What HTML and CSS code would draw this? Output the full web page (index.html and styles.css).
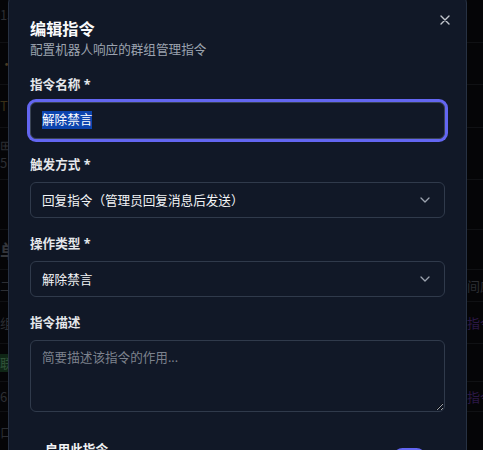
FILE: index.html
```html
<!DOCTYPE html>
<html lang="zh-CN">
<head>
<meta charset="utf-8">
<title>编辑指令</title>
<link rel="stylesheet" href="styles.css">
</head>
<body>
<div class="page">
  <div class="row r1"><span class="lt">15</span><span class="rt"></span></div>
  <div class="row r2"><span class="lt dot">•</span><span class="rt"></span></div>
  <div class="row r3"><span class="lt warn">T</span><span class="rt"></span></div>
  <div class="row r4"><span class="lt">⊞<br>5</span><span class="rt"></span></div>
  <div class="row r5"><span class="lt"></span><span class="rt"></span></div>
  <div class="row r6"><span class="lt big">单</span><span class="rt"></span></div>
  <div class="row r7"><span class="lt">二</span><span class="rt">间应</span></div>
  <div class="row r8"><span class="lt">组</span><span class="rt purple">指令</span></div>
  <div class="row r9"><span class="lt green">联</span><span class="rt"></span></div>
  <div class="row r10"><span class="lt">6</span><span class="rt purple">指令</span></div>
  <div class="row r11"><span class="lt">口</span><span class="rt"></span></div>
</div>

<div class="overlay">
  <div class="modal">
    <button class="close" type="button" aria-label="关闭">
      <svg width="10" height="10" viewBox="0 0 10 10"><path d="M1 1 L9 9 M9 1 L1 9" stroke="#c3c7cf" stroke-width="1.4" stroke-linecap="round" fill="none"/></svg>
    </button>
    <header class="head">
      <h2 class="title">编辑指令</h2>
      <p class="subtitle">配置机器人响应的群组管理指令</p>
    </header>
    <div class="form">
      <div class="field">
        <label class="label">指令名称 *</label>
        <div class="control focused"><span class="selected">解除禁言</span></div>
      </div>
      <div class="field">
        <label class="label">触发方式 *</label>
        <div class="control select">
          <span>回复指令（管理员回复消息后发送）</span>
          <svg class="chev" width="10" height="6" viewBox="0 0 10 6"><path d="M1 1 L5 5 L9 1" stroke="#9ca3af" stroke-width="1.3" fill="none" stroke-linecap="round" stroke-linejoin="round"/></svg>
        </div>
      </div>
      <div class="field">
        <label class="label">操作类型 *</label>
        <div class="control select">
          <span>解除禁言</span>
          <svg class="chev" width="10" height="6" viewBox="0 0 10 6"><path d="M1 1 L5 5 L9 1" stroke="#9ca3af" stroke-width="1.3" fill="none" stroke-linecap="round" stroke-linejoin="round"/></svg>
        </div>
      </div>
      <div class="field">
        <label class="label">指令描述</label>
        <textarea class="control textarea" placeholder="简要描述该指令的作用..."></textarea>
      </div>
      <div class="toggle-row">
        <div class="toggle-text">
          <div class="toggle-title">启用此指令</div>
          <div class="toggle-desc">关闭后机器人将不会响应此指令</div>
        </div>
        <div class="switch"><span class="knob"></span></div>
      </div>
    </div>
  </div>
</div>
</body>
</html>
```

FILE: styles.css
```css
* { box-sizing: border-box; }
html, body { margin: 0; padding: 0; }
body {
  width: 483px;
  height: 450px;
  overflow: hidden;
  background: #050507;
  font-family: "Noto Sans", "Noto Sans CJK SC", sans-serif;
  position: relative;
}

/* dimmed page behind the dialog */
.page {
  display: flex;
  flex-direction: column;
  width: 483px;
}
.row {
  display: flex;
  justify-content: space-between;
  align-items: center;
  border-bottom: 1px solid #101114;
  font-size: 13px;
  color: #2c2e33;
  font-family: "Noto Sans CJK SC", sans-serif;
}
.row .rt { width: 16px; overflow: hidden; white-space: nowrap; }
.row .lt { width: 8px; overflow: visible; white-space: nowrap; line-height: 18px; }
.r1 { height: 43px; align-items: flex-start; padding-top: 6px; }
.r2 { height: 42px; }
.r3 { height: 43px; }
.r4 { height: 52px; }
.r5 { height: 50px; }
.r6 { height: 40px; }
.r7 { height: 32px; }
.r8 { height: 42px; }
.r9 { height: 38px; }
.r10 { height: 30px; }
.r11 { height: 40px; }
.dot { color: #4a3c24; }
.warn { color: #3a3018; }
.big { font-size: 18px; font-weight: 700; color: #34363b; }
.purple { color: #2c1846; }
.green { background: #0f2616; color: #2f5238; }

.overlay {
  position: absolute;
  inset: 0;
  padding-left: 8px;
}
.modal {
  position: relative;
  width: 459px;
  margin-top: -6px;
  background: #111827;
  border: 1px solid #273142;
  border-radius: 9px;
  padding: 21.5px 21px 24px;
  color: #e5e7eb;
  font-family: "Noto Sans", "Noto Sans CJK SC", sans-serif;
}
.close {
  position: absolute;
  top: 19px;
  right: 15px;
  width: 12px;
  height: 12px;
  padding: 1px;
  border: 0;
  background: none;
  display: flex;
  align-items: center;
  justify-content: center;
}
.head { display: flex; flex-direction: column; }
.title {
  margin: 0;
  font-size: 16.2px;
  line-height: 24px;
  font-weight: 700;
  color: #f9fafb;
}
.subtitle {
  margin: 0;
  font-size: 12.6px;
  line-height: 18px;
  color: #9ca3af;
}
.form {
  display: flex;
  flex-direction: column;
  gap: 17px;
  margin-top: 17px;
}
.field {
  display: flex;
  flex-direction: column;
  gap: 8px;
}
.label {
  font-size: 12.6px;
  line-height: 18px;
  font-weight: 700;
  color: #e5e7eb;
}
.control {
  display: flex;
  align-items: center;
  height: 36px;
  padding: 0 11px;
  background: #111827;
  border: 1px solid #303a4b;
  border-radius: 6px;
  font-size: 12.6px;
  color: #f3f4f6;
  font-family: inherit;
}
.focused {
  height: 37px;
  border-color: #3a4455;
  box-shadow: 0 0 0 3px #6366f1;
}
.selected {
  background: #0c44ae;
  color: #ffffff;
  line-height: 18px;
}
.select { justify-content: space-between; padding-right: 14px; }
.chev { display: block; }
.textarea {
  display: block;
  height: 72px;
  padding: 8px 11px;
  line-height: 18px;
  resize: vertical;
  outline: none;
  width: 100%;
}
.textarea::placeholder { color: #7d828d; }
.toggle-row {
  display: flex;
  justify-content: space-between;
  align-items: flex-start;
  padding: 12px 19px 12px 15px;
}
.toggle-title {
  font-size: 12.6px;
  line-height: 18px;
  font-weight: 700;
  color: #f3f4f6;
}
.toggle-desc {
  font-size: 11.5px;
  line-height: 16px;
  color: #9ca3af;
}
.switch {
  margin-top: 7px;
  width: 33px;
  height: 19px;
  border-radius: 10px;
  background: #6366f1;
  display: flex;
  align-items: center;
  justify-content: flex-end;
  padding: 2px;
}
.knob {
  width: 15px;
  height: 15px;
  border-radius: 50%;
  background: #ffffff;
}
```
